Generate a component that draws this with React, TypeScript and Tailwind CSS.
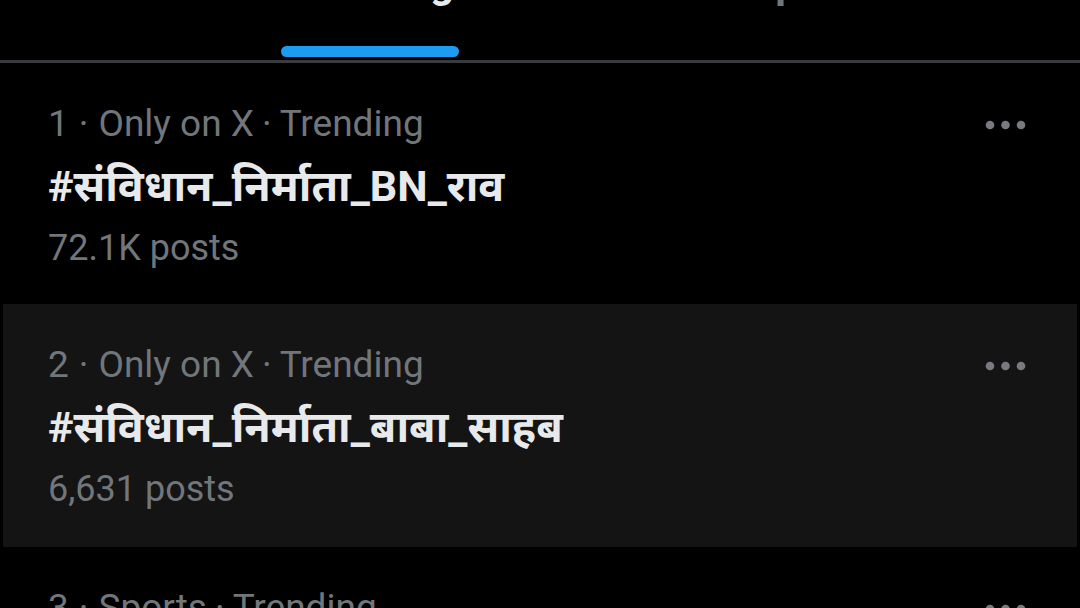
import React from "react";

type Trend = {
    rank: number;
    context: string;
    tag: string;
    posts: string;
    active?: boolean;
};

const TRENDS: Trend[] = [
    { rank: 1, context: "Only on X", tag: "#संविधान_निर्माता_BN_राव", posts: "72.1K posts" },
    { rank: 2, context: "Only on X", tag: "#संविधान_निर्माता_बाबा_साहब", posts: "6,631 posts", active: true },
    { rank: 3, context: "Sports", tag: "#IPL2025", posts: "18.4K posts" },
];

const TABS = [
    { label: "For You", width: "w-[194px]" },
    { label: "Trending", width: "w-[178px]", selected: true },
    { label: "News", width: "w-[111px]" },
    { label: "Sports", width: "w-[124px]" },
];

const FONT = { fontFamily: "Roboto, 'Noto Sans', 'Noto Sans Devanagari', 'Liberation Sans', sans-serif" };

function MoreDots() {
    return (
        <svg width="41" height="10" viewBox="0 0 41 10" className="mt-[2px] shrink-0">
            <circle cx="5" cy="5" r="4.3" fill="#777b80" />
            <circle cx="20.5" cy="5" r="4.3" fill="#777b80" />
            <circle cx="36" cy="5" r="4.3" fill="#777b80" />
        </svg>
    );
}

function TabBar() {
    return (
        <div className="h-[60px] overflow-hidden">
            <div className="-ml-[3px] -mt-[41px] flex gap-[90px]">
                {TABS.map((tab) => (
                    <div key={tab.label} className={`${tab.width} flex shrink-0 flex-col items-center`}>
                        <span
                            className={`whitespace-nowrap text-[42px] font-bold leading-[48px] ${
                                tab.selected ? "text-[#e7e9ea]" : "text-[#71767b]"
                            }`}
                        >
                            {tab.label}
                        </span>
                        {tab.selected && <div className="mt-[39px] h-[11px] w-full rounded-full bg-[#1d9bf0]" />}
                    </div>
                ))}
            </div>
        </div>
    );
}

function TrendRow({ trend }: { trend: Trend }) {
    return (
        <div
            className={
                trend.active
                    ? "mx-[3px] bg-[#141414] pb-[27px] pl-[45px] pr-[51px] pt-[30px]"
                    : "pb-[25px] pl-[48px] pr-[54px] pt-[30px]"
            }
        >
            <div className="flex items-center justify-between">
                <p className="text-[37px] leading-[62px] text-[#71767b]">
                    {trend.rank}
                    <span className="px-[10px]">·</span>
                    {trend.context}
                    <span className="px-[8px]">·</span>
                    Trending
                </p>
                <MoreDots />
            </div>
            <p className="text-[43px] font-bold leading-[62px] text-[#e7e9ea]">{trend.tag}</p>
            <p className="text-[36px] leading-[62px] text-[#71767b]">{trend.posts}</p>
        </div>
    );
}

export default function App() {
    return (
        <div className="h-[608px] w-[1080px] overflow-hidden bg-black" style={FONT}>
            <TabBar />
            <div className="h-[3px] bg-[#393b3f]" />
            {TRENDS.map((trend) => (
                <TrendRow key={trend.rank} trend={trend} />
            ))}
        </div>
    );
}
